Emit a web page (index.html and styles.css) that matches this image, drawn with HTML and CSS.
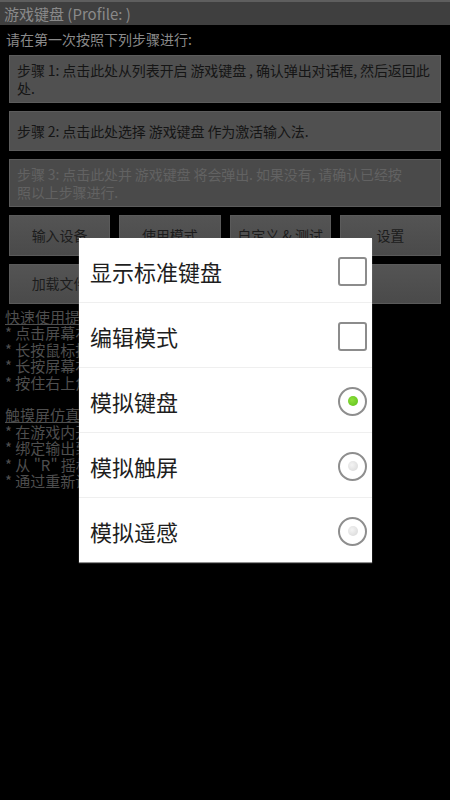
FILE: index.html
```html
<!DOCTYPE html>
<html lang="zh-CN">
<head>
<meta charset="utf-8">
<title>游戏键盘</title>
<link rel="stylesheet" href="styles.css">
</head>
<body>
<div class="screen">
  <div class="titlebar">游戏键盘 (Profile: )</div>
  <div class="content">
    <div class="intro">请在第一次按照下列步骤进行:</div>
    <div class="steps">
      <div class="step step-multi">步骤 1: 点击此处从列表开启 游戏键盘 , 确认弹出对话框, 然后返回此<br>处.</div>
      <div class="step">步骤 2: 点击此处选择 游戏键盘 作为激活输入法.</div>
      <div class="step step-multi step-disabled">步骤 3: 点击此处并 游戏键盘 将会弹出. 如果没有, 请确认已经按<br>照以上步骤进行.</div>
    </div>
    <div class="buttons">
      <div class="btn">输入设备</div>
      <div class="btn">使用模式</div>
      <div class="btn">自定义 &amp; 测试</div>
      <div class="btn">设置</div>
      <div class="btn">加载文件</div>
      <div class="btn">保存文件</div>
      <div class="btn">关于</div>
      <div class="btn"></div>
    </div>
    <div class="tips">
      <div class="tip-head">快速使用提示:</div>
      <div>* 点击屏幕右上角显示菜单</div>
      <div>* 长按鼠标按钮进行拖拽</div>
      <div>* 长按屏幕右下角显示键盘</div>
      <div>* 按住右上角返回</div>
      <div class="blank"></div>
      <div class="tip-head">触摸屏仿真模式:</div>
      <div>* 在游戏内开启触摸屏</div>
      <div>* 绑定输出到触摸区域</div>
      <div>* 从 "R" 摇杆控制光标</div>
      <div>* 通过重新设置调整灵敏度</div>
    </div>
  </div>

  <div class="dialog">
    <div class="row">
      <span class="label">显示标准键盘</span>
      <span class="checkbox"></span>
    </div>
    <div class="row">
      <span class="label">编辑模式</span>
      <span class="checkbox"></span>
    </div>
    <div class="row">
      <span class="label">模拟键盘</span>
      <span class="radio on"><span class="dot"></span></span>
    </div>
    <div class="row">
      <span class="label">模拟触屏</span>
      <span class="radio"><span class="dot"></span></span>
    </div>
    <div class="row">
      <span class="label">模拟遥感</span>
      <span class="radio"><span class="dot"></span></span>
    </div>
  </div>
</div>
</body>
</html>
```
FILE: styles.css
```css
html, body {
  margin: 0;
  padding: 0;
  background: #000;
}
body {
  font-family: "Noto Sans CJK SC", "Noto Sans", sans-serif;
}
.screen {
  position: relative;
  width: 450px;
  height: 800px;
  background: #000;
  overflow: hidden;
}
.titlebar {
  height: 23px;
  border-top: 2px solid #5e5e5e;
  background: #3f3f3f;
  color: #8a8a8a;
  font-size: 15px;
  line-height: 23px;
  padding-left: 4px;
  white-space: nowrap;
}
.content {
  padding: 0 9px;
}
.intro {
  color: #8a8a8a;
  font-size: 14px;
  line-height: 18px;
  padding: 5px 0 7px 0;
  margin-left: -3px;
}
.steps {
  display: flex;
  flex-direction: column;
  gap: 8px;
}
.step {
  min-height: 40px;
  box-sizing: border-box;
  display: flex;
  align-items: center;
  padding: 5px 0 5px 7px;
  background: #505050;
  border: 1px solid #5c5c5c;
  color: #151515;
  font-size: 14px;
  line-height: 18px;
  letter-spacing: -0.1px;
  white-space: nowrap;
}
.step-multi {
  display: block;
}
.step-disabled {
  color: #626262;
  background: #4a4a4a;
  min-height: 47px;
}
.buttons {
  margin-top: 8px;
  display: grid;
  grid-template-columns: repeat(4, 1fr);
  column-gap: 9px;
  row-gap: 8px;
}
.btn {
  height: 40px;
  box-sizing: border-box;
  display: flex;
  align-items: center;
  justify-content: center;
  padding-bottom: 2px;
  background: linear-gradient(#545454, #4a4a4a);
  border: 1px solid #5a5a5a;
  color: #1c1c1c;
  font-size: 14px;
  white-space: nowrap;
}
.buttons .btn:nth-child(-n+4) {
  height: 41px;
}
.tips {
  margin: 5px 0 0 -4px;
  color: #4e4e4e;
  font-size: 15px;
  line-height: 16.4px;
  white-space: nowrap;
}
.tip-head {
  text-decoration: underline;
}
.blank {
  height: 16.4px;
}
.dialog {
  position: absolute;
  left: 79px;
  top: 238px;
  width: 293px;
  height: 324px;
  background: #fff;
  box-shadow: 0 1px 1px rgba(160,160,160,0.9);
  display: flex;
  flex-direction: column;
}
.row {
  flex: 1;
  display: flex;
  align-items: center;
  justify-content: space-between;
  padding: 2px 5px 0 11px;
  border-top: 1px solid #efefef;
}
.row:first-child {
  border-top: none;
}
.label {
  font-size: 22px;
  color: #1e1e1e;
}
.checkbox {
  width: 25px;
  height: 25px;
  border: 2px solid #8c8c8c;
  border-radius: 3px;
  background: #fff;
}
.radio {
  width: 25px;
  height: 25px;
  border: 2px solid #8e8e8e;
  border-radius: 50%;
  display: flex;
  align-items: center;
  justify-content: center;
}
.dot {
  width: 10px;
  height: 10px;
  border-radius: 50%;
  background: radial-gradient(circle at 40% 40%, #f4f4f4, #d6d6d6);
}
.radio.on .dot {
  background: radial-gradient(circle at 40% 40%, #8ee03a, #5cbf1c);
}
```
